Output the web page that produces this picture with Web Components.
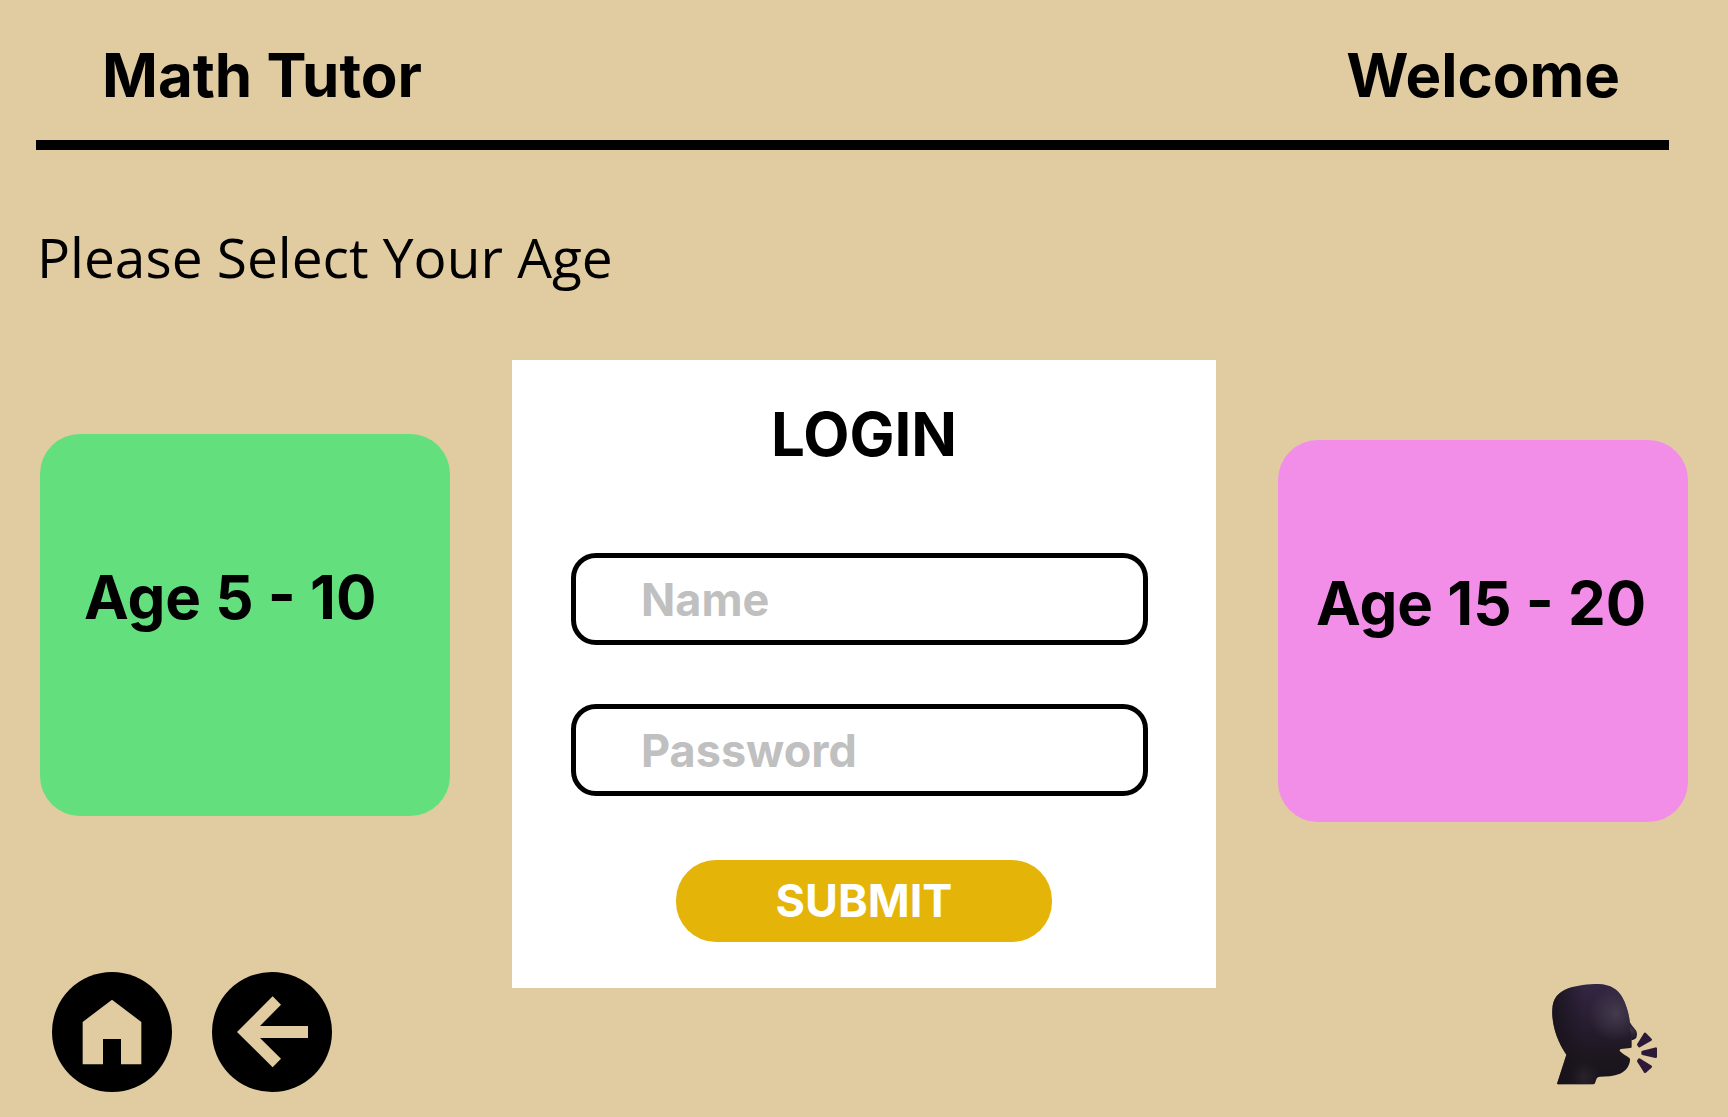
<!DOCTYPE html>
<html lang="en">
<head>
<meta charset="utf-8">
<title>Math Tutor</title>
<style>
html{background:#e1cba0}
body{margin:0;background:#e1cba0;color:#000;font-family:Inter,"Liberation Sans",sans-serif}
</style>
</head>
<body>
<tutor-page></tutor-page>

<script>
const define = (name, html, init) => {
  const template = document.createElement('template');
  template.innerHTML = html;
  customElements.define(name, class extends HTMLElement {
    constructor() {
      super();
      this.attachShadow({ mode: 'open' }).append(template.content.cloneNode(true));
    }
    connectedCallback() { if (init) init(this, this.shadowRoot); }
  });
};

define('tutor-header', `
<style>
:host{display:block;margin:0 59px 0 36px;border-bottom:10px solid #000}
header{display:flex;justify-content:space-between;align-items:center;padding:39px 49px 29px 66px;font-size:60px;line-height:72px;font-weight:700}
h1{margin:0;font:inherit}
</style>
<header><h1><slot name="brand"></slot></h1><slot name="greeting"></slot></header>`);

define('age-card', `
<style>
:host{display:block}
button{display:block;box-sizing:border-box;width:100%;height:382px;padding:127px 20px 0 var(--card-indent,36px);border:0;border-radius:40px;background:var(--card-color);color:inherit;font:700 60px/72px Inter,"Liberation Sans",sans-serif;text-align:left;white-space:nowrap;cursor:pointer}
span{display:block;height:255px}
</style>
<button type="button"><span><slot></slot></span></button>`);

define('text-field', `
<style>
:host{display:block}
input{display:block;box-sizing:border-box;width:100%;height:92px;padding:0 65px;border:5px solid #000;border-radius:25px;background:#fff;color:#000;font:700 45px/54px Inter,"Liberation Sans",sans-serif;outline-offset:4px}
input::placeholder{color:#c0c0c0;opacity:1}
</style>
<input id="field">`, (host, root) => {
  const input = root.querySelector('input');
  input.type = host.getAttribute('type') || 'text';
  input.placeholder = host.getAttribute('label');
  input.setAttribute('aria-label', host.getAttribute('label'));
});

define('login-panel', `
<style>
:host{display:block;background:#fff}
form{display:flex;flex-direction:column;padding:38px 68px 46px 59px}
h2{margin:0 -9px 83px 0;font-size:60px;line-height:72px;font-weight:700;text-align:center}
.fields{display:grid;gap:59px;margin-bottom:64px}
.actions{display:flex;justify-content:center;margin-right:-9px}
button{width:376px;height:82px;padding:0;border:0;border-radius:40px;background:#e5b408;color:#fff;font:700 45px/54px Inter,"Liberation Sans",sans-serif;cursor:pointer}
</style>
<form>
  <h2>LOGIN</h2>
  <div class="fields">
    <text-field label="Name"></text-field>
    <text-field label="Password" type="password"></text-field>
  </div>
  <div class="actions"><button type="submit">SUBMIT</button></div>
</form>`);

define('icon-button', `
<style>
:host{display:block}
button{display:block;width:120px;height:120px;padding:0;border:0;border-radius:50%;background:none;cursor:pointer}
::slotted(svg){display:block;width:120px;height:120px}
</style>
<button type="button"><slot></slot></button>`, (host, root) => {
  root.querySelector('button').setAttribute('aria-label', host.getAttribute('label'));
});

define('tutor-page', `
<style>
:host{display:flex;flex-direction:column;min-height:100vh}
.prompt{margin:0;padding:70px 37px 66px;font-family:"Open Sans","Noto Sans",sans-serif;font-weight:400;font-size:55px;line-height:74px}
main{flex:1;display:grid;grid-template-columns:410px minmax(0,1fr) 410px;column-gap:62px;padding:0 40px}
login-panel{align-self:start}
.side{display:flex;flex-direction:column;justify-content:space-between;gap:24px;padding-bottom:25px}
.young{padding-top:74px}
.older{padding-top:80px}
.young age-card{--card-color:#63df7e;--card-indent:44px}
.older age-card{--card-color:#f38ee8;--card-indent:38px}
nav{display:flex;gap:40px;padding:0 12px}
.older nav{justify-content:flex-end;padding:0 24px}
</style>
<tutor-header><span slot="brand">Math Tutor</span><span slot="greeting">Welcome</span></tutor-header>
<p class="prompt">Please Select Your Age</p>
<main>
  <div class="side young">
    <age-card>Age 5 - 10</age-card>
    <nav>
      <icon-button label="Home">
        <svg viewBox="66 66 360 360"><circle cx="246" cy="246" r="180"/><path fill="#e1cba0" d="M246 149 334 216V343H273V267H219V343H158V216Z"/></svg>
      </icon-button>
      <icon-button label="Back">
        <svg viewBox="546 66 360 360"><circle cx="726" cy="246" r="180"/><path fill="#e1cba0" d="M621 246 728 139 753 164 690 228H834V264H690L753 326 728 352Z"/></svg>
      </icon-button>
    </nav>
  </div>
  <login-panel></login-panel>
  <div class="side older">
    <age-card>Age 15 - 20</age-card>
    <nav>
      <icon-button label="Read aloud">
        <svg viewBox="72 36 360 360">
          <defs>
            <linearGradient id="skin" x1="0" y1="0" x2="0" y2="1"><stop offset="0" stop-color="#332644"/><stop offset=".3" stop-color="#2a1f34"/><stop offset=".75" stop-color="#1c161e"/><stop offset="1" stop-color="#18141b"/></linearGradient>
            <radialGradient id="cheek" gradientUnits="userSpaceOnUse" cx="288" cy="160" r="84"><stop offset="0" stop-color="#443b4d"/><stop offset="1" stop-color="#443b4d" stop-opacity="0"/></radialGradient>
            <radialGradient id="throat" gradientUnits="userSpaceOnUse" cx="192" cy="352" r="46"><stop offset="0" stop-color="#28222d"/><stop offset="1" stop-color="#28222d" stop-opacity="0"/></radialGradient>
            <linearGradient id="nape" gradientUnits="userSpaceOnUse" x1="96" y1="0" x2="190" y2="0"><stop offset="0" stop-color="#17121a" stop-opacity=".9"/><stop offset="1" stop-color="#17121a" stop-opacity="0"/></linearGradient>
            <radialGradient id="nose" gradientUnits="userSpaceOnUse" cx="334" cy="212" r="26"><stop offset="0" stop-color="#3d3444"/><stop offset="1" stop-color="#1d1622"/></radialGradient>
            <path id="head" d="M114 373Q110 373 112 368L139 284C114 248 95 198 97 150C98 113 117 96 145 85C170 76 205 72 235 72C273 73 294 89 307 112C320 137 326 160 330 188L335 236V260Q335 264 331 264L303 267Q297 269 300 274C307 281 319 288 328 294Q331 297 330 302C327 320 316 334 300 341C281 348 259 350 240 350Q231 350 229 358L225 369Q224 373 219 373Z"/>
          </defs>
          <path fill="url(#nose)" d="M329 186C336 198 344 205 349 213Q354 224 349 233C345 238 339 239 334 241Z"/>
          <use href="#head" fill="url(#skin)"/><use href="#head" fill="url(#cheek)"/><use href="#head" fill="url(#throat)"/><use href="#head" fill="url(#nape)"/>
          <g fill="#2d1a38" stroke="#2d1a38" stroke-width="8" stroke-linejoin="round"><path d="M375 222 392 239 358 258 355 254Z"/><path d="M407 266V290L368 281V276Z"/><path d="M355 303 358 299 392 320 375 335Z"/></g>
        </svg>
      </icon-button>
    </nav>
  </div>
</main>`);
</script>
</body>
</html>
